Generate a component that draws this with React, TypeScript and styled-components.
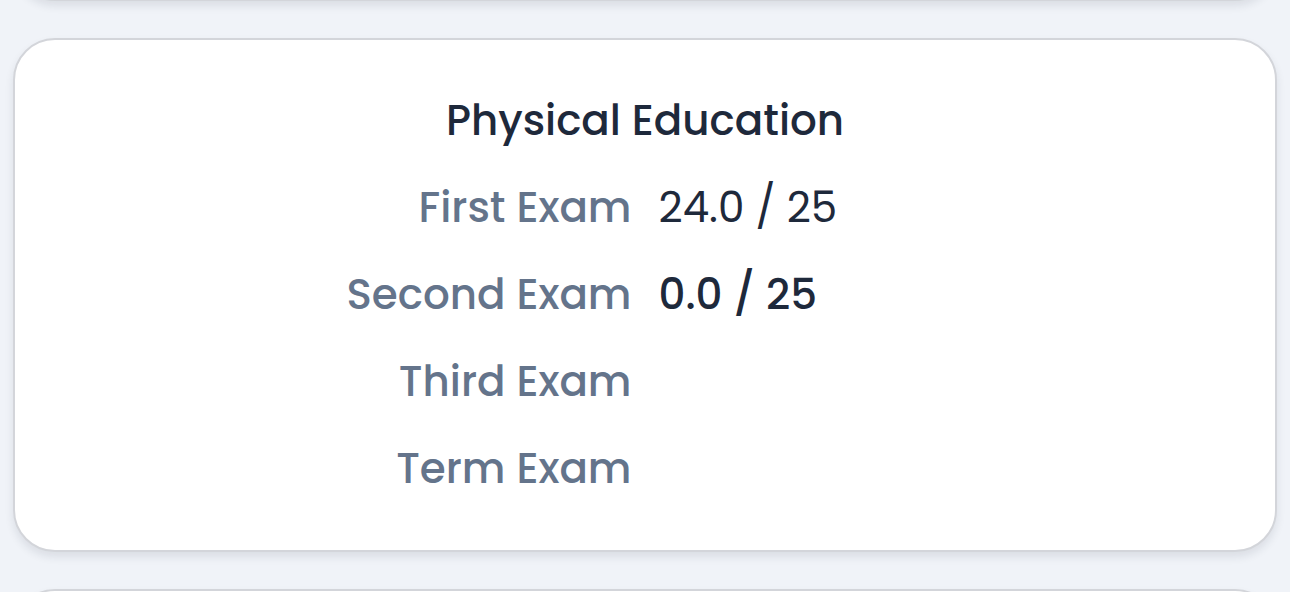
import React from 'react'
import styled, { createGlobalStyle } from 'styled-components'

const GlobalStyle = createGlobalStyle`
  html, body {
    margin: 0;
    padding: 0;
    background: #f0f3f8;
    font-family: 'Poppins', 'Inter', 'Noto Sans', sans-serif;
  }
`

const Page = styled.div`
  height: 592px;
  overflow: hidden;
`

const List = styled.div`
  display: flex;
  flex-direction: column;
  gap: 37px;
  margin-top: -163px;
  padding: 0 13px;
`

const Card = styled.section<{ $stub?: boolean }>`
  background: #ffffff;
  border: 2px solid #d3d5da;
  border-radius: 42px;
  box-shadow: 0 5px 9px rgba(30, 41, 59, 0.1);
  padding: 37px 0 38px;
  min-height: ${({ $stub }) => ($stub ? '85px' : 'auto')};
`

const Grid = styled.div`
  display: grid;
  grid-template-columns: 1fr 1fr;
  column-gap: 27px;
  align-items: center;
`

const Title = styled.h2`
  grid-column: 1 / -1;
  margin: 0;
  text-align: center;
  font-size: 42px;
  font-weight: 500;
  line-height: 87px;
  color: #1e293b;
`

const Label = styled.div`
  text-align: right;
  font-size: 42px;
  font-weight: 500;
  line-height: 87px;
  color: #64748b;
`

const Value = styled.div<{ $strong?: boolean }>`
  text-align: left;
  font-size: 42px;
  font-weight: ${({ $strong }) => ($strong ? 500 : 400)};
  line-height: 87px;
  color: #1e293b;
`

type Exam = { name: string; score?: string; strong?: boolean }

const exams: Exam[] = [
  { name: 'First Exam', score: '24.0 / 25' },
  { name: 'Second Exam', score: '0.0 / 25', strong: true },
  { name: 'Third Exam' },
  { name: 'Term Exam' },
]

const SubjectCard = ({ subject, rows }: { subject: string; rows: Exam[] }) => (
  <Card>
    <Grid>
      <Title>{subject}</Title>
      {rows.map((r) => (
        <React.Fragment key={r.name}>
          <Label>{r.name}</Label>
          <Value $strong={r.strong}>{r.score ?? ''}</Value>
        </React.Fragment>
      ))}
    </Grid>
  </Card>
)

const App = () => (
  <Page>
    <GlobalStyle />
    <List>
      <Card $stub />
      <SubjectCard subject="Physical Education" rows={exams} />
      <Card $stub />
    </List>
  </Page>
)

export default App
